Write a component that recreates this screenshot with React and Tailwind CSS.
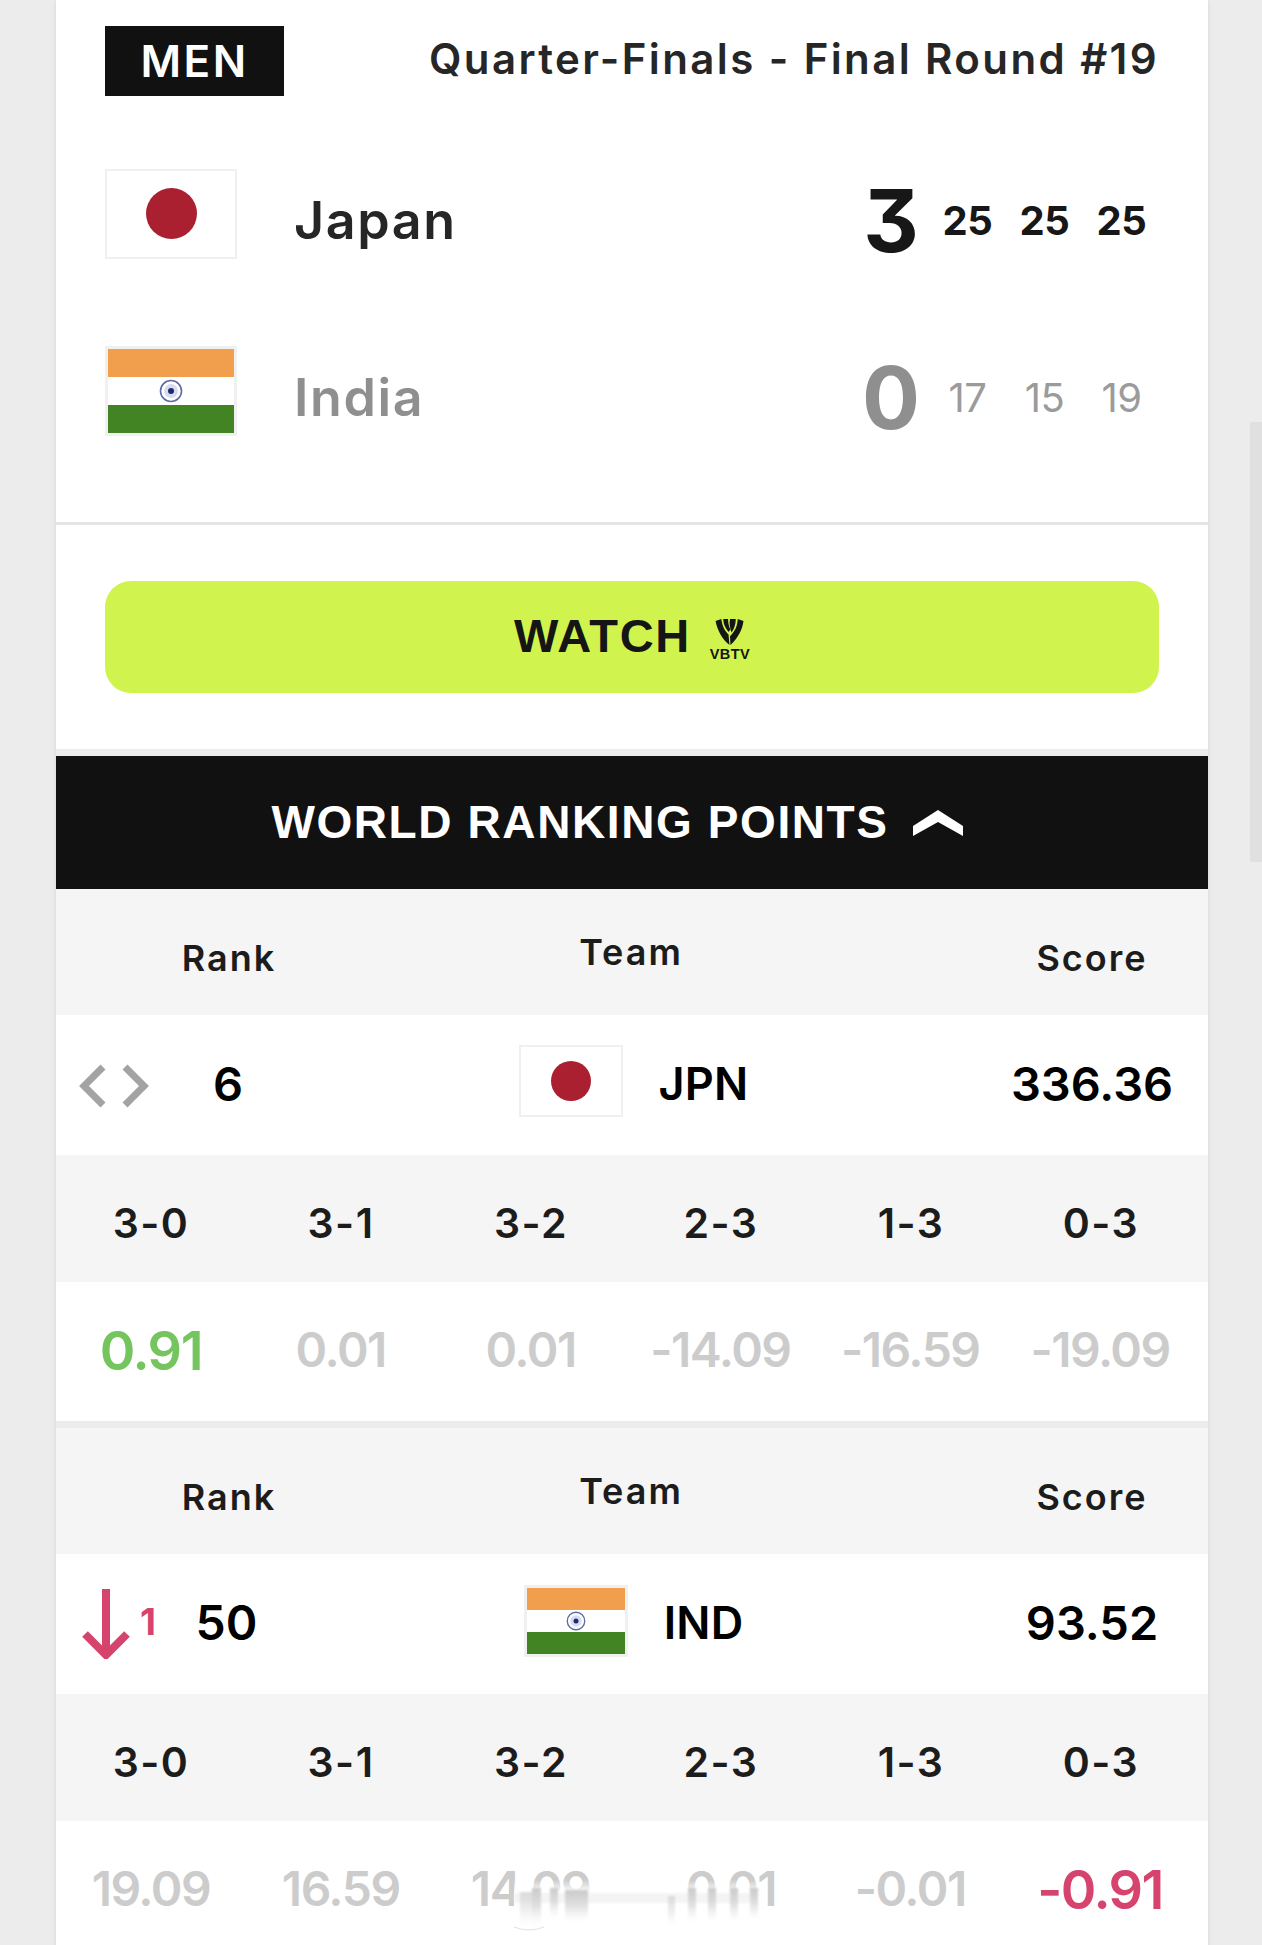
const F = { fontFamily: "Inter, 'Liberation Sans', sans-serif" };

function JapanFlag({ className, dot = "w-[51px] h-[51px]" }) {
  return (
    <div className={"flex items-center justify-center bg-white border-2 border-[#f0f0f0] " + className}>
      <div className={"rounded-full bg-[#ab2031] " + dot} />
    </div>
  );
}

function IndiaFlag({ className, wheel = 24 }) {
  return (
    <div className={"flex flex-col bg-white border-[3px] border-[#f0f0f0] " + className}>
      <div className="flex-1 bg-[#f29f4d]" />
      <div className="flex-1 flex items-center justify-center bg-white">
        <svg width={wheel} height={wheel} viewBox="0 0 24 24">
          <circle cx="12" cy="12" r="10.5" fill="none" stroke="#5f6aa6" strokeWidth="1.6" />
          <circle cx="12" cy="12" r="7" fill="#d9dcee" />
          <circle cx="12" cy="12" r="3" fill="#1c2a70" />
        </svg>
      </div>
      <div className="flex-1 bg-[#428424]" />
    </div>
  );
}

function Sets({ values, className }) {
  return (
    <div className={"flex " + className}>
      {values.map((v, i) => (
        <span key={i} className="w-[77px] text-center">{v}</span>
      ))}
    </div>
  );
}

function TeamRow({ name, flag, big, sets, muted }) {
  return (
    <div className="h-[177px] flex items-center px-[49px]">
      {flag}
      <span className={"ml-[57px] text-[52px] font-semibold tracking-[1.6px] mt-[14px] " + (muted ? "text-[#8f8f8f]" : "text-[#262626]")}>{name}</span>
      <div className="ml-auto mt-[14px] flex items-center">
        <span className={"w-[60px] text-center text-[86px] leading-none font-bold [font-feature-settings:'cv09'] " + (muted ? "text-[#8f8f8f]" : "text-[#171717]")}>{big}</span>
        <Sets values={sets} className={"ml-[8px] mr-[-1px] text-[40px] tracking-[-0.5px] " + (muted ? "font-normal text-[#9b9b9b]" : "font-bold text-[#171717]")} />
      </div>
    </div>
  );
}

function RankHeader() {
  return (
    <div className="h-[126px] pt-[11px] bg-[#f5f5f5] grid grid-cols-[342px_578px_232px] items-center text-center text-[36px] font-semibold tracking-[2px] text-[#1c1c1c]">
      <span className="pl-[4px]">Rank</span>
      <span className="mb-[12px] pr-[112px]">Team</span>
      <span>Score</span>
    </div>
  );
}

function RankRow({ movement, rank, rankClass, flag, code, score, teamClass }) {
  return (
    <div className="h-[140px] pb-[2px] grid grid-cols-[342px_578px_232px] items-center text-[47px] font-semibold text-black">
      <div className="relative h-full flex items-center justify-center">
        {movement}
        <span className={rankClass}>{rank}</span>
      </div>
      <div className={"flex items-center justify-center " + teamClass}>
        {flag}
        <span className="ml-[36px] text-[45px] tracking-[0.2px]">{code}</span>
      </div>
      <span className="text-center">{score}</span>
    </div>
  );
}

const RESULTS = ["3-0", "3-1", "3-2", "2-3", "1-3", "0-3"];

function ResultLabels() {
  return (
    <div className="h-[127px] pt-[10px] bg-[#f5f5f5] pr-[12px] grid grid-cols-6 items-center text-center text-[41px] font-semibold tracking-[1.5px] text-[#1c1c1c]">
      {RESULTS.map((r) => <span key={r}>{r}</span>)}
    </div>
  );
}

function ResultValues({ items, className }) {
  return (
    <div className={"pr-[13px] pb-[3px] grid grid-cols-6 items-center text-center text-[48px] font-semibold tracking-[-1.5px] text-[#cccccc] " + className}>
      {items.map((it, i) => (
        <span key={i} className={it.cls || ""}>{it.v}</span>
      ))}
    </div>
  );
}

function AngleArrows() {
  return (
    <svg className="absolute left-[23px] top-[49px]" width="70" height="44" viewBox="0 0 70 44" fill="none" stroke="#a3a3a3" strokeWidth="7">
      <path d="M24 3 L5 22 L24 41" />
      <path d="M46 3 L65 22 L46 41" />
    </svg>
  );
}

function DownArrow() {
  return (
    <div className="absolute left-[26px] top-[35px] flex">
      <svg width="48" height="70" viewBox="0 0 48 70" fill="none" stroke="#d6436d" strokeWidth="8">
        <path d="M24 0 V66" />
        <path d="M3 45 L24 66 L45 45" />
      </svg>
      <span className="ml-[10px] mt-[13px] text-[37px] leading-[40px] font-bold text-[#d6436d]">1</span>
    </div>
  );
}

function VbtvLogo() {
  return (
    <div className="ml-[19px] mt-[5px] flex flex-col items-center">
      <svg width="29" height="26" viewBox="0 0 29 27" fill="#151515">
        <path d="M0 2 L6 0 C7 8 10 13 13.5 16 L14.5 27 C7 21 2 12 0 2Z" />
        <path d="M8 0 L13 0 C13 5 14 8 15.5 11 L13.5 13.5 C10 9 8 5 8 0Z" />
        <path d="M15 0 L21 0 C21 6 19 11 16.5 14 C15 9 14 5 15 0Z" />
        <path d="M23 0 L29 2 C28 11 23 20 15.5 27 L15 18 C20 13 23 7 23 0Z" />
      </svg>
      <span className="mt-[3px] text-[14.5px] leading-[12px] font-semibold tracking-[0.4px] text-[#151515]">VBTV</span>
    </div>
  );
}

function Watermark() {
  return (
    <svg className="absolute left-[500px] top-[1880px]" width="270" height="60" viewBox="0 0 270 60">
      <defs>
        <linearGradient id="fade" x1="0" y1="0" x2="0" y2="1">
          <stop offset="0" stopColor="#fff" stopOpacity="0" />
          <stop offset="0.3" stopColor="#fff" stopOpacity="1" />
        </linearGradient>
        <linearGradient id="streak" x1="0" y1="0" x2="0" y2="1">
          <stop offset="0" stopColor="#cacaca" />
          <stop offset="0.5" stopColor="#dadada" stopOpacity="0.8" />
          <stop offset="1" stopColor="#eeeeee" stopOpacity="0" />
        </linearGradient>
      </defs>
      <rect x="14" y="0" width="246" height="40" fill="url(#fade)" />
      <g className="blur-[1px]">
        <rect x="14" y="13" width="244" height="10" fill="#f0f0f0" opacity="0.7" />
        <rect x="20" y="12" width="12" height="34" fill="url(#streak)" opacity="0.6" />
        <rect x="32" y="8" width="9" height="38" fill="url(#streak)" />
        <rect x="50" y="8" width="8" height="30" fill="url(#streak)" />
        <rect x="65" y="10" width="23" height="32" fill="url(#streak)" />
        <rect x="168" y="16" width="7" height="30" fill="url(#streak)" opacity="0.6" />
        <rect x="188" y="8" width="8" height="34" fill="url(#streak)" />
        <rect x="208" y="8" width="8" height="34" fill="url(#streak)" />
        <rect x="230" y="8" width="8" height="34" fill="url(#streak)" />
        <rect x="250" y="8" width="8" height="32" fill="url(#streak)" />
      </g>
      <path d="M14 47 Q29 53 44 47" fill="none" stroke="#e2e2e2" strokeWidth="1" />
    </svg>
  );
}

export default function App() {
  return (
    <div className="relative h-[1945px] overflow-hidden bg-[#ececec] pl-[56px]" style={F}>
      <div className="absolute right-0 top-[422px] w-[12px] h-[440px] bg-[#e0e0e0]" />
      <div className="w-[1152px] bg-white shadow-[0_0_4px_#d4d4d4]">
        <div className="h-[125px] flex items-start justify-between pl-[49px] pr-[49px] pt-[26px]">
          <div className="w-[179px] h-[70px] bg-[#111111] text-white flex items-center justify-center text-[44px] font-semibold tracking-[2.5px]">MEN</div>
          <span className="text-[42px] leading-[66px] font-semibold tracking-[2.4px] text-[#262626]">Quarter-Finals - Final Round #19</span>
        </div>
        <TeamRow name="Japan" big="3" sets={[25, 25, 25]} flag={<JapanFlag className="w-[132px] h-[90px] shrink-0" />} />
        <TeamRow name="India" muted big="0" sets={[17, 15, 19]} flag={<IndiaFlag className="w-[132px] h-[90px] shrink-0" />} />
        <div className="mt-[43px] h-[3px] bg-[#e4e4e4]" />
        <div className="h-[231px] border-b-[7px] border-[#ececec] px-[49px] pt-[56px]">
          <div className="h-[112px] rounded-[26px] bg-[#d0f34e] flex items-center justify-center text-[47px] font-bold tracking-[1.6px] text-[#151515]" style={{ fontFamily: "'Liberation Sans', sans-serif" }}>
            <span className="mb-[2px]">WATCH</span>
            <VbtvLogo />
          </div>
        </div>
        <div className="h-[133px] bg-[#111111] pr-[30px] flex items-center justify-center text-white text-[46px] font-bold tracking-[1.6px]" style={{ fontFamily: "'Liberation Sans', sans-serif" }}>
          WORLD RANKING POINTS
          <svg className="ml-[24px]" width="50" height="26" viewBox="0 0 50 26" fill="#ffffff">
            <path d="M0 16 L25 0 L50 16 V26 L25 12 L0 26Z" />
          </svg>
        </div>

        <RankHeader />
        <RankRow movement={<AngleArrows />} rank="6" rankClass="pl-[2px]" code="JPN" score="336.36" teamClass="pr-[107px]" flag={<JapanFlag dot="w-[40px] h-[40px]" className="w-[104px] h-[72px] mb-[6px]" />} />
        <ResultLabels />
        <ResultValues className="h-[139px]" items={[
          { v: "0.91", cls: "text-[#74c55d] text-[54px]" },
          { v: "0.01" }, { v: "0.01" }, { v: "-14.09" }, { v: "-16.59" }, { v: "-19.09" },
        ]} />
        <div className="h-[7px] bg-[#ececec]" />

        <RankHeader />
        <RankRow movement={<DownArrow />} rank="50" rankClass="ml-[-1px] text-[48px]" code="IND" score="93.52" teamClass="pr-[117px]" flag={<IndiaFlag className="w-[104px] h-[72px] mb-[4px] ml-[10px]" wheel={20} />} />
        <ResultLabels />
        <ResultValues className="h-[139px]" items={[
          { v: "19.09" }, { v: "16.59" }, { v: "14.09" }, { v: "0.01", cls: "pl-[21px]" }, { v: "-0.01" },
          { v: "-0.91", cls: "text-[#d6436d] text-[54px]" },
        ]} />
      </div>
      <Watermark />
    </div>
  );
}
